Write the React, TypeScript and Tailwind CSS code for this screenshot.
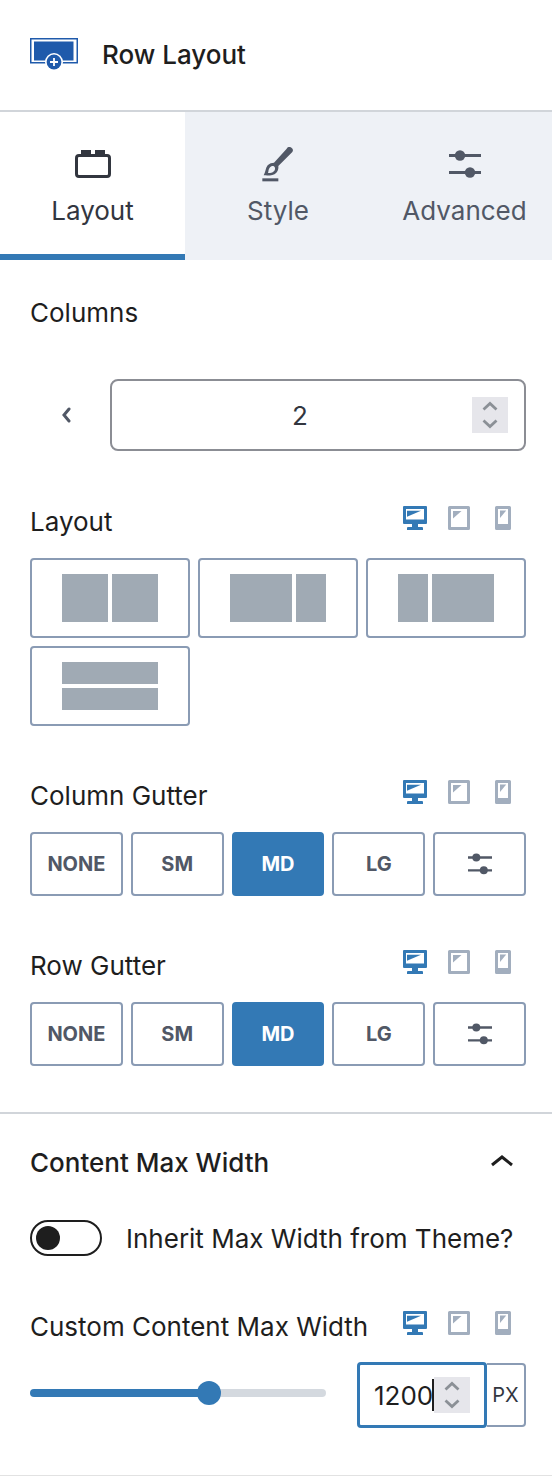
import { useState, type ReactNode } from "react";

function RowLogo() {
  return (
    <svg width="48" height="34" viewBox="0 0 48 34" aria-hidden="true">
      <rect x="0.75" y="0.75" width="46.5" height="24" fill="#fff" stroke="#1f5aab" strokeWidth="1.5" />
      <rect x="4" y="3.5" width="39.5" height="19" fill="#1f5aab" />
      <circle cx="24" cy="24" r="9" fill="#fff" />
      <circle cx="24" cy="24" r="7.4" fill="#1f5aab" />
      <path d="M24 20v8M20 24h8" stroke="#fff" strokeWidth="1.8" />
    </svg>
  );
}

function BlockIcon() {
  return (
    <svg width="36" height="28" viewBox="0 0 36 28" aria-hidden="true">
      <rect x="1.5" y="5.5" width="33" height="21" rx="2.5" fill="none" stroke="currentColor" strokeWidth="3" />
      <path d="M6 0h10v5H6zM20 0h10v5H20z" fill="currentColor" />
    </svg>
  );
}

function BrushIcon() {
  return (
    <svg width="32" height="35" viewBox="0 0 96 105" aria-hidden="true">
      <path
        d="M5 85C11 76 10 63 17 55C22 49 30 47 36 47L74 5A8.500 8.500 0 0 1 91 15L49 57C50 65 48 72 43 77C34 86 20 86 5 85ZM18 78C30 79 40 73 39 63C37 55 28 56 23 62C19 67 20 72 18 78Z"
        fill="currentColor"
        fillRule="evenodd"
      />
      <path d="M1 94h48v9H1z" fill="currentColor" />
    </svg>
  );
}

function SlidersIcon() {
  return (
    <svg width="32" height="28" viewBox="0 0 32 28" aria-hidden="true">
      <path d="M0 5.500h32M0 22.500h32" stroke="currentColor" strokeWidth="3" />
      <circle cx="11" cy="5.500" r="5.200" fill="currentColor" />
      <circle cx="21" cy="22.500" r="5.200" fill="currentColor" />
    </svg>
  );
}

function SmallSlidersIcon() {
  return (
    <svg width="24" height="22" viewBox="0 0 24 22" aria-hidden="true">
      <path d="M0 4.500h24M0 17.300h24" stroke="currentColor" strokeWidth="2.300" />
      <circle cx="8.300" cy="4.500" r="4" fill="currentColor" />
      <circle cx="15.800" cy="17.300" r="4" fill="currentColor" />
    </svg>
  );
}

function DesktopIcon() {
  return (
    <svg width="24" height="24" viewBox="0 0 24 24" fill="currentColor" fillRule="evenodd" aria-hidden="true">
      <path d="M1 0h22a1 1 0 0 1 1 1v16a1 1 0 0 1-1 1h-8v3h4a1 1 0 0 1 1 1v2H4v-2a1 1 0 0 1 1-1h4v-3H1a1 1 0 0 1-1-1V1a1 1 0 0 1 1-1zM3 3v10.500h18V3z" />
      <path d="M4 4.700h14L4 10.700z" />
    </svg>
  );
}

function TabletIcon() {
  return (
    <svg width="22" height="24" viewBox="0 0 22 24" fill="currentColor" fillRule="evenodd" aria-hidden="true">
      <path d="M1.500 0h19A1.500 1.500 0 0 1 22 1.500v21a1.500 1.500 0 0 1-1.500 1.500h-19A1.500 1.500 0 0 1 0 22.500v-21A1.500 1.500 0 0 1 1.500 0zM3 3v18h16V3z" />
      <path d="M5 5h8.500L5 12.500z" />
    </svg>
  );
}

function PhoneIcon() {
  return (
    <svg width="16" height="24" viewBox="0 0 16 24" fill="currentColor" fillRule="evenodd" aria-hidden="true">
      <path d="M1.500 0h13A1.500 1.500 0 0 1 16 1.500v21a1.500 1.500 0 0 1-1.500 1.500h-13A1.500 1.500 0 0 1 0 22.500v-21A1.500 1.500 0 0 1 1.500 0zM3 3v15h10V3z" />
      <path d="M5 4.500h6.200L5 12z" />
    </svg>
  );
}

const devices = [
  { name: "Desktop", icon: <DesktopIcon /> },
  { name: "Tablet", icon: <TabletIcon /> },
  { name: "Mobile", icon: <PhoneIcon /> },
];

function ResponsiveHeader({ children }: { children: ReactNode }) {
  const [device, setDevice] = useState("Desktop");
  return (
    <div className="mb-5 flex items-start justify-between">
      <div className="leading-8">{children}</div>
      <div className="mr-px flex">
        {devices.map((d) => (
          <button
            key={d.name}
            type="button"
            aria-label={d.name}
            aria-pressed={device === d.name}
            onClick={() => setDevice(d.name)}
            className={`flex h-6 w-11 items-center justify-center ${device === d.name ? "text-[#3379b5]" : "text-[#a2aebe]"}`}
          >
            {d.icon}
          </button>
        ))}
      </div>
    </div>
  );
}

function Stepper({ onStep }: { onStep: (delta: number) => void }) {
  return (
    <div className="flex h-9 w-9 shrink-0 flex-col bg-[#e6e6eb] text-[#8b9096]">
      <button type="button" aria-label="Increase" onClick={() => onStep(1)} className="flex h-[18px] items-center justify-center">
        <svg width="16" height="10" viewBox="0 0 16 10" fill="none" aria-hidden="true">
          <path d="M1.500 8.500L8 2.500l6.500 6" stroke="currentColor" strokeWidth="2.800" />
        </svg>
      </button>
      <button type="button" aria-label="Decrease" onClick={() => onStep(-1)} className="flex h-[18px] items-center justify-center">
        <svg width="16" height="10" viewBox="0 0 16 10" fill="none" aria-hidden="true">
          <path d="M1.500 1.500L8 7.500l6.500-6" stroke="currentColor" strokeWidth="2.800" />
        </svg>
      </button>
    </div>
  );
}

const layouts = [
  { name: "Equal columns", className: "grid-cols-2" },
  { name: "Left heavy", className: "grid-cols-[62fr_30fr]" },
  { name: "Right heavy", className: "grid-cols-[30fr_62fr]" },
  { name: "Stacked rows", className: "grid-rows-2" },
];

function GutterPicker({ label }: { label: string }) {
  const [value, setValue] = useState("MD");
  return (
    <section className="mt-[54px]">
      <ResponsiveHeader>{label}</ResponsiveHeader>
      <div className="grid grid-cols-5 gap-2" role="group" aria-label={label}>
        {["NONE", "SM", "MD", "LG", "Custom"].map((size) => (
          <button
            key={size}
            type="button"
            aria-label={size}
            aria-pressed={value === size}
            onClick={() => setValue(size)}
            className={`flex h-16 items-center justify-center rounded-sm border-2 text-xl font-bold ${
              value === size ? "border-[#3379b5] bg-[#3379b5] text-white" : "border-[#8a9bb4] text-[#515866]"
            }`}
          >
            {size === "Custom" ? <SmallSlidersIcon /> : size}
          </button>
        ))}
      </div>
    </section>
  );
}

const tabs = [
  { name: "Layout", icon: <BlockIcon /> },
  { name: "Style", icon: <BrushIcon /> },
  { name: "Advanced", icon: <SlidersIcon /> },
];

const numberInput =
  "min-w-0 bg-transparent outline-none [appearance:textfield] [&::-webkit-inner-spin-button]:appearance-none";

export default function App() {
  const [tab, setTab] = useState("Layout");
  const [columns, setColumns] = useState(2);
  const [width, setWidth] = useState(1200);
  const maxWidth = 1955;
  const fill = (width / maxWidth) * 100;

  return (
    <main className="overflow-hidden border-b border-[#e2e2e2] bg-white font-[Inter,sans-serif] text-[26px] text-[#1e1e1e]">
      <header className="flex h-28 items-center gap-6 border-b-2 border-[#d1d5da] pl-[30px]">
        <RowLogo />
        <h1 className="font-medium leading-8">Row Layout</h1>
      </header>

      <div className="-mr-1.5 grid grid-cols-[185fr_186fr_187fr]" role="tablist">
        {tabs.map((t) => (
          <button
            key={t.name}
            type="button"
            role="tab"
            aria-selected={tab === t.name}
            onClick={() => setTab(t.name)}
            className={`flex h-[148px] flex-col items-center border-b-[6px] pt-8 ${
              tab === t.name ? "border-[#3379b5] bg-white text-[#32363f]" : "border-[#eef1f6] bg-[#eef1f6] text-[#515866]"
            }`}
          >
            <span className="flex h-10 items-center">{t.icon}</span>
            <span className="mt-[11px] leading-8">{t.name}</span>
          </button>
        ))}
      </div>

      <div className="pt-[37px] pr-[26px] pb-[46px] pl-[30px]">
        <label htmlFor="columns" className="block leading-8">
          Columns
        </label>
        <div className="mt-[50px] flex gap-2">
          <button
            type="button"
            aria-label="Fewer columns"
            onClick={() => setColumns(Math.max(1, columns - 1))}
            className="flex w-[72px] shrink-0 items-center justify-center text-[#515866]"
          >
            <svg width="10" height="16" viewBox="0 0 10 16" fill="none" aria-hidden="true">
              <path d="M8 2L3 8l5 6" stroke="currentColor" strokeWidth="3" strokeLinecap="round" />
            </svg>
          </button>
          <div className="flex h-[72px] min-w-0 flex-1 items-center rounded-lg border-2 border-[#8b8d94] pr-4 pl-4 text-[#32363f]">
            <input
              id="columns"
              type="number"
              value={columns}
              onChange={(e) => setColumns(Number(e.target.value))}
              className={`w-0 flex-1 text-center ${numberInput}`}
            />
            <Stepper onStep={(d) => setColumns(columns + d)} />
          </div>
        </div>

        <section className="mt-[55px]">
          <ResponsiveHeader>Layout</ResponsiveHeader>
          <div className="grid grid-cols-3 gap-2">
            {layouts.map((l) => (
              <button
                key={l.name}
                type="button"
                aria-label={l.name}
                className="flex h-20 items-center justify-center rounded-sm border-2 border-[#8a9bb4]"
              >
                <span className={`grid h-12 w-24 gap-1 ${l.className}`}>
                  <span className="bg-[#a0aab4]" />
                  <span className="bg-[#a0aab4]" />
                </span>
              </button>
            ))}
          </div>
        </section>

        <GutterPicker label="Column Gutter" />
        <GutterPicker label="Row Gutter" />
      </div>

      <section className="border-t-2 border-[#d1d5da] pt-[33px] pr-[26px] pb-[47px] pl-[30px]">
        <h2 className="font-medium leading-8">
          <button type="button" aria-expanded="true" className="flex w-full items-center justify-between pr-3">
            Content Max Width
            <svg width="24" height="16" viewBox="0 0 24 16" fill="none" aria-hidden="true">
              <path d="M2 10L12 2l10 8" stroke="currentColor" strokeWidth="3" />
            </svg>
          </button>
        </h2>

        <label className="mt-[41px] flex h-9 items-center gap-6">
          <input
            type="checkbox"
            role="switch"
            className="flex h-9 w-[72px] shrink-0 appearance-none items-center rounded-full border-2 border-[#1e1e1e] px-1 before:h-6 before:w-6 before:rounded-full before:bg-[#1e1e1e] checked:justify-end"
          />
          Inherit Max Width from Theme?
        </label>

        <div className="mt-[55px]">
          <ResponsiveHeader>
            <label htmlFor="max-width">Custom Content Max Width</label>
          </ResponsiveHeader>
          <div className="-mt-px flex items-center">
            <input
              type="range"
              aria-label="Custom Content Max Width"
              min={0}
              max={maxWidth}
              value={width}
              onChange={(e) => setWidth(Number(e.target.value))}
              style={{ backgroundImage: `linear-gradient(to right, #3379b5 ${fill}%, #d4d9df ${fill}%)` }}
              className="mr-[31px] mb-1 h-2 min-w-0 flex-1 appearance-none rounded-full [&::-webkit-slider-thumb]:h-6 [&::-webkit-slider-thumb]:w-6 [&::-webkit-slider-thumb]:appearance-none [&::-webkit-slider-thumb]:rounded-full [&::-webkit-slider-thumb]:bg-[#3379b5]"
            />
            <div className="flex h-[66px] w-[130px] shrink-0 items-center rounded-sm border-3 border-[#3379b5] px-[14px]">
              <span className="relative flex w-[60px] shrink-0">
                <input
                  id="max-width"
                  type="number"
                  value={width}
                  onChange={(e) => setWidth(Number(e.target.value))}
                  className={`w-full ${numberInput}`}
                />
                <span className="absolute right-0 h-8 w-0.5 self-center bg-[#1e1e1e]" />
              </span>
              <Stepper onStep={(d) => setWidth(width + d)} />
            </div>
            <button
              type="button"
              aria-label="Unit: PX"
              className="h-16 w-[39px] shrink-0 rounded-r-sm border-2 border-l-0 border-[#8a9bb4] text-xl text-[#32363f]"
            >
              PX
            </button>
          </div>
        </div>
      </section>
    </main>
  );
}
